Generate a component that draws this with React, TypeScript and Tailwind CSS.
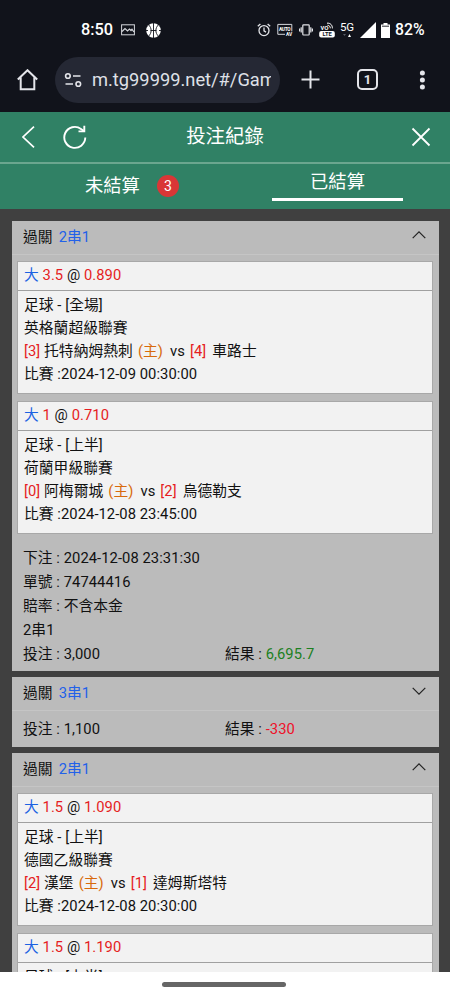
import type { ReactNode } from "react";

type Leg = {
  line: string;
  odds: string;
  period: string;
  league: string;
  homeScore: string;
  home: string;
  awayScore: string;
  away: string;
  time: string;
};

const firstLegs: Leg[] = [
  { line: "3.5", odds: "0.890", period: "全場", league: "英格蘭超級聯賽", homeScore: "3", home: "托特納姆熱刺", awayScore: "4", away: "車路士", time: "2024-12-09 00:30:00" },
  { line: "1", odds: "0.710", period: "上半", league: "荷蘭甲級聯賽", homeScore: "0", home: "阿梅爾城", awayScore: "2", away: "烏德勒支", time: "2024-12-08 23:45:00" },
];

const lastLeg: Leg = { line: "1.5", odds: "1.090", period: "上半", league: "德國乙級聯賽", homeScore: "2", home: "漢堡", awayScore: "1", away: "達姆斯塔特", time: "2024-12-08 20:30:00" };

function StatusBar() {
  return (
    <div className="flex h-[60px] items-center pl-[81px] pr-[24px] text-white">
      <span className="w-[32px] whitespace-nowrap text-[16.3px] font-medium leading-[20px]">8:50</span>
      <svg className="ml-[8px] h-[12px] w-[14px] shrink-0" viewBox="0 0 14 12" fill="none" stroke="#d5d7dc">
        <rect x="0.6" y="0.8" width="12.8" height="10" />
        <path d="M1 7.5 4 4.5 6.5 7 8.5 5 10 6.5 11 5.3 13 8" strokeWidth="1.2" />
      </svg>
      <svg className="ml-[11px] h-[15px] w-[15px] shrink-0" viewBox="0 0 15 15">
        <circle cx="7.5" cy="7.5" r="7.3" fill="#fff" />
        <path d="M7.5 0v15M4.5 7.5h6M2.5 1.8C6 5 6 10 2.5 13.2M12.5 1.8C9 5 9 10 12.5 13.2M0 7.5h2M13 7.5h2" fill="none" stroke="#11131b" strokeWidth="0.9" />
      </svg>
      <span className="flex-1" />
      <svg className="h-[14px] w-[14px] shrink-0" viewBox="0 0 14 14" fill="none" stroke="#e4e5e9" strokeWidth="1.3">
        <circle cx="7" cy="7.6" r="5" />
        <path d="M7 4.5v3.3l2 1.3M.8 3.3 3.4 1M13.2 3.3 10.6 1" />
      </svg>
      <svg className="ml-[6px] h-[14px] w-[16px] shrink-0" viewBox="0 0 16 14">
        <path d="M8 11.3H.8V1.4h14v7" fill="none" stroke="#d5d7dc" />
        <text x="2" y="7.7" fontSize="4.8" fontWeight="700" fill="#fff" textLength="11.5">AUTO</text>
        <text x="9" y="13.2" fontSize="4.8" fontWeight="700" fill="#fff">AV</text>
      </svg>
      <svg className="ml-[6px] h-[14px] w-[14px] shrink-0" viewBox="0 0 14 14" fill="none" stroke="#e4e5e9" strokeWidth="1.2">
        <rect x="3.8" y="1.8" width="6.4" height="10.2" rx="0.8" />
        <path d="M2.2 4.2v5.4M.6 5.5v3M11.8 4.2v5.4M13.4 5.5v3" />
      </svg>
      <svg className="ml-[6px] h-[16px] w-[16px] shrink-0" viewBox="0 0 16 16">
        <text x="1.5" y="8" fontSize="7.5" fontWeight="500" fill="#fff">vo</text>
        <path d="M8 1.2c3.4-.4 5.4 1.8 5.4 5.2M8.5 3.3c1.9 0 2.8 1.3 2.8 3" fill="none" stroke="#fff" strokeWidth="1" />
        <rect x="0.2" y="9" width="15.6" height="6.4" rx="2" fill="#fff" />
        <text x="3.5" y="14.4" fontSize="5.8" fontWeight="700" fill="#11131b">LTE</text>
      </svg>
      <span className="ml-[5px] mr-[1px] flex h-[18px] w-[14px] flex-col items-center">
        <span className="text-[11.5px] leading-[12px] tracking-[-0.2px]">5G</span>
        <svg className="mt-px h-[3px] w-[8px] shrink-0" viewBox="0 0 8 3">
          <path d="M0 0h3L1.5 2z" fill="#555963" />
          <path d="M5 3h3L6.5 0z" fill="#fff" />
        </svg>
      </span>
      <svg className="ml-[5px] h-[16px] w-[16px] shrink-0" viewBox="0 0 16 16"><path d="M16 0v16H0z" fill="#fff" /></svg>
      <svg className="ml-[5px] h-[15px] w-[9px] shrink-0" viewBox="0 0 9 15"><path d="M2.5 0h4v1.5H9V15H0V1.5h2.5z" fill="#fff" /><path d="M1 3.2h7" stroke="#11131b" strokeWidth="0.9" /></svg>
      <span className="ml-[5px] w-[31px] whitespace-nowrap text-[15.8px] font-medium leading-[20px]">82%</span>
    </div>
  );
}

function BrowserBar() {
  return (
    <div className="flex h-[52px] items-start pl-[17px]">
      <svg className="mt-[9px] h-[22px] w-[21px] shrink-0" viewBox="0 0 21 22" fill="none" stroke="#e4e5ea" strokeWidth="2">
        <path d="M.8 10.5 10.5 1.2l9.7 9.3M3.7 8.5v11.8h13.6V8.5" />
      </svg>
      <div className="ml-[17px] mt-[-3px] flex h-[46px] w-[225px] shrink-0 items-center rounded-full bg-[#252834] pl-[9px]">
        <svg className="h-[16px] w-[18px] shrink-0" viewBox="0 0 18 16" fill="none" stroke="#e4e5ea" strokeWidth="1.6">
          <circle cx="3.9" cy="4" r="2.3" /><path d="M9 4h7.5M1.5 12H9" /><circle cx="14.3" cy="12" r="2.3" />
        </svg>
        <span className="ml-[10px] w-[179px] overflow-hidden whitespace-nowrap text-[18.3px] leading-[26px] text-[#dfe0e7]">m.tg99999.net/#/Gam</span>
      </div>
      <svg className="ml-[21px] mt-[10px] h-[19px] w-[19px] shrink-0" viewBox="0 0 19 19" stroke="#e4e5ea" strokeWidth="2"><path d="M9.5.5v18M.5 9.5h18" /></svg>
      <span className="ml-[37px] mt-[9px] flex h-[21px] w-[21px] shrink-0 items-center justify-center rounded-[5px] border-2 border-[#e4e5ea] text-[13px] font-bold leading-[17px] text-[#e4e5ea]">1</span>
      <svg className="ml-[41px] mt-[10px] h-[20px] w-[6px] shrink-0" viewBox="0 0 6 20" fill="#e4e5ea"><circle cx="3.4" cy="3" r="2.5" /><circle cx="3.4" cy="10" r="2.5" /><circle cx="3.4" cy="17" r="2.5" /></svg>
    </div>
  );
}

function Header() {
  return (
    <header className="bg-[#308165] text-white">
      <div className="flex h-[52px] items-center border-b-2 border-[#6ba68f] pl-[22px] pr-[19px]">
        <svg className="h-[22px] w-[13px] shrink-0" viewBox="0 0 13 22" fill="none" stroke="#fff" strokeWidth="1.7"><path d="M12 .7 1 11l11 10.3" /></svg>
        <svg className="ml-[28px] h-[24px] w-[24px] shrink-0" viewBox="0 0 24 24" fill="none" stroke="#fff" strokeWidth="1.9">
          <path d="M22.3 12.6A10.5 10.5 0 1 1 18 3.9L21.3 6.3" /><path d="M21.3 .8v5.6h-5.8" />
        </svg>
        <h1 className="w-[276px] text-center text-[19.4px] leading-[28px]">投注紀錄</h1>
        <svg className="ml-auto h-[20px] w-[20px] shrink-0" viewBox="0 0 20 20" stroke="#fff" strokeWidth="1.8"><path d="m1.5 1.5 17 17m0-17-17 17" /></svg>
      </div>
      <nav className="flex h-[45px] text-[18.3px]">
        <div className="flex w-[225px] items-center pb-[2px] pl-[85px]">
          <span className="leading-[28px]">未結算</span>
          <span className="ml-[17px] flex h-[22px] w-[22px] items-center justify-center rounded-full bg-[#d93636] text-[14px] leading-[22px]">3</span>
        </div>
        <div className="ml-[47px] flex h-[37px] w-[131px] justify-center border-b-3 border-white pt-[4px]"><span className="leading-[28px]">已結算</span></div>
      </nav>
    </header>
  );
}

function LegTitle({ line, odds }: { line: string; odds: string }) {
  return (
    <div className="h-[29px] border-b border-[#a0a0a0] pl-[6px] leading-[27px]">
      <span className="text-[#1b62e2]">大</span> <span className="text-[#e51d23]">{line}</span> @ <span className="text-[#e51d23]">{odds}</span>
    </div>
  );
}

function LegBox({ leg }: { leg: Leg }) {
  return (
    <section className="h-[133px] border border-[#a8a8a8] bg-[#f2f2f2]">
      <LegTitle line={leg.line} odds={leg.odds} />
      <div className="whitespace-nowrap pl-[6px] pt-[3px] leading-[22.9px]">
        <p>足球 - [{leg.period}]</p>
        <p>{leg.league}</p>
        <p>
          <span className="text-[#e51d23]">[{leg.homeScore}]</span> {leg.home}
          <span className="ml-[5px] text-[#d86a0c]">(主)</span>
          <span className="ml-[7px]">vs</span>
          <span className="ml-[5px] text-[#e51d23]">[{leg.awayScore}]</span>
          <span className="ml-[6px]">{leg.away}</span>
        </p>
        <p>比賽 :{leg.time}</p>
      </div>
    </section>
  );
}

function BetCard({ type, open, children }: { type: string; open: boolean; children: ReactNode }) {
  return (
    <article className="shrink-0 bg-[#bbbbbb]">
      <div className="flex h-[34px] items-center justify-between border-b border-[#c5c5c5] pl-[11px] pr-[13px] leading-[24px]">
        <span className="mb-[2px]">過關<span className="ml-[6px] text-[#2261e9]">{type}</span></span>
        <svg className="mb-[5px] h-[8px] w-[14px] shrink-0" viewBox="0 0 14 8" fill="none" stroke="#222" strokeWidth="1.2">
          <path d={open ? "M.7 7.2 7 .9l6.3 6.3" : "M.7.8 7 7.1 13.3.8"} />
        </svg>
      </div>
      {children}
    </article>
  );
}

function Totals({ stake, result, positive }: { stake: string; result: string; positive: boolean }) {
  return (
    <div className="flex">
      <span className="w-[202px]">投注 : {stake}</span>
      <span>結果 : <span className={positive ? "text-[#1c801f]" : "text-[#ee1128]"}>{result}</span></span>
    </div>
  );
}

export default function App() {
  return (
    <div className="flex h-[1000px] w-[450px] flex-col overflow-hidden bg-[#404040] font-['Roboto','Noto_Sans_CJK_TC',sans-serif] text-[#111]">
      <div className="h-[112px] shrink-0 bg-[#11131b]">
        <StatusBar />
        <BrowserBar />
      </div>
      <Header />
      <main className="flex h-[763px] shrink-0 flex-col gap-[6px] overflow-hidden pl-[12px] pr-[11px] pt-[12px] text-[14.75px] tracking-[0.06px]">
        <BetCard type="2串1" open>
          <div className="flex flex-col gap-[7px] pl-[5px] pr-[6px] pt-[6px]">
            {firstLegs.map((leg) => <LegBox key={leg.league} leg={leg} />)}
          </div>
          <div className="h-[137px] pl-[11px] pt-[12px] leading-[24px]">
            <p>下注 : 2024-12-08 23:31:30</p>
            <p>單號 : 74744416</p>
            <p>賠率 : 不含本金</p>
            <p>2串1</p>
            <Totals stake="3,000" result="6,695.7" positive />
          </div>
        </BetCard>
        <BetCard type="3串1" open={false}>
          <div className="h-[36px] pl-[11px] pt-[6px] leading-[24px]"><Totals stake="1,100" result="-330" positive={false} /></div>
        </BetCard>
        <BetCard type="2串1" open>
          <div className="flex flex-col gap-[7px] pl-[5px] pr-[6px] pt-[6px]">
            <LegBox leg={lastLeg} />
            <section className="h-[133px] border border-[#a8a8a8] bg-[#f2f2f2]">
              <LegTitle line="1.5" odds="1.190" />
              <p className="pl-[6px] pt-[3px] leading-[22.9px]">足球 - [上半]</p>
            </section>
          </div>
        </BetCard>
      </main>
      <footer className="flex h-[28px] shrink-0 justify-center bg-white pt-[10px]">
        <span className="mr-[2px] h-[5px] w-[124px] rounded-full bg-[#666]" />
      </footer>
    </div>
  );
}
